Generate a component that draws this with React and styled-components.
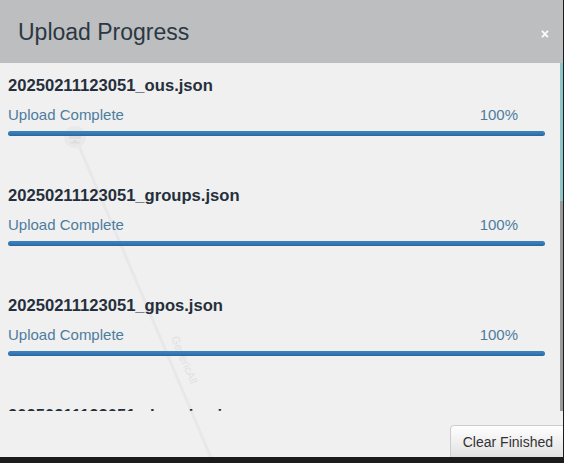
import React from 'react';
import styled, { createGlobalStyle } from 'styled-components';

const GlobalStyle = createGlobalStyle`
  html, body {
    margin: 0;
    padding: 0;
    background: #1b1b1b;
  }
  body {
    font-family: "Liberation Sans", Arial, sans-serif;
  }
`;

const Panel = styled.div`
  position: relative;
  width: 563px;
  height: 457px;
  background: #f0f0f0;
  display: flex;
  flex-direction: column;
  overflow: hidden;
`;

const Header = styled.div`
  position: relative;
  z-index: 2;
  height: 63px;
  flex-shrink: 0;
  background: #bdbebf;
  display: flex;
  align-items: center;
  justify-content: space-between;
  padding: 0 14px 0 18px;
`;

const Title = styled.h4`
  margin: 0;
  font-size: 23px;
  font-weight: normal;
  color: #2b3744;
  line-height: 26px;
`;

const Close = styled.span`
  color: #fff;
  font-size: 14px;
  font-weight: bold;
  line-height: 14px;
  margin-top: 4px;
`;

// faint graph sitting behind the modal body
const Graph = styled.svg`
  position: absolute;
  left: 0;
  top: 0;
  width: 563px;
  height: 457px;
  z-index: 0;
  pointer-events: none;
`;

const Body = styled.div`
  position: relative;
  z-index: 1;
  flex: 1;
  display: flex;
  min-height: 0;
`;

const List = styled.div`
  flex: 1;
  overflow: hidden;
  padding: 0 15px 0 8px;
`;

const ScrollTrack = styled.div`
  width: 3px;
  flex-shrink: 0;
  background: #9a9a9a;
`;

const ScrollThumb = styled.div`
  background: #8ec5c8;
`;

const Item = styled.div`
  height: 110px;
  padding-top: 13px;
  box-sizing: border-box;
`;

const FileName = styled.div`
  font-size: 16.6px;
  font-weight: bold;
  color: #252f3b;
  line-height: 20px;
`;

const StatusRow = styled.div`
  display: flex;
  justify-content: space-between;
  margin-top: 10px;
  padding-right: 27px;
  font-size: 15px;
  line-height: 18px;
  color: #4d7c9f;
`;

const Bar = styled.div`
  margin-top: 7px;
  height: 5px;
  border-radius: 3px;
  background: linear-gradient(to bottom, #3d83bf 0%, #337ab7 50%, #2a6598 100%);
`;

const Footer = styled.div`
  position: relative;
  z-index: 1;
  height: 46px;
  flex-shrink: 0;
  display: flex;
  justify-content: flex-end;
  align-items: flex-start;
  padding-top: 14px;
  box-sizing: border-box;
  overflow: hidden;
`;

const Button = styled.button`
  height: 34px;
  margin-right: -3px;
  padding: 0 12px;
  border: 1px solid #cccccc;
  border-radius: 4px;
  background: linear-gradient(to bottom, #ffffff 0%, #e0e0e0 100%);
  font-family: "Liberation Sans", Arial, sans-serif;
  font-size: 14px;
  color: #333;
  white-space: nowrap;
`;

const files = [
  'ous', 'groups', 'gpos', 'domains',
  'computers', 'users', 'containers', 'certtemplates',
];

const BackgroundGraph = () => (
  <Graph viewBox="0 0 563 457">
    <line x1="79" y1="146" x2="212" y2="460" stroke="#e8e8e8" strokeWidth="3" />
    <text
      x="0"
      y="0"
      fill="#e0e0e0"
      fontSize="11"
      fontFamily="Liberation Sans, Arial, sans-serif"
      transform="translate(171 338) rotate(67)"
    >
      GenericAll
    </text>
    <circle cx="75" cy="137" r="11" fill="#e9e9e9" />
    <rect x="69" y="131" width="12" height="8" rx="1" fill="#dedede" />
    <rect x="73" y="140" width="4" height="2" fill="#dedede" />
    <rect x="70" y="142" width="10" height="1.5" fill="#dedede" />
  </Graph>
);

const UploadItem = ({ name }) => (
  <Item>
    <FileName>20250211123051_{name}.json</FileName>
    <StatusRow>
      <span>Upload Complete</span>
      <span>100%</span>
    </StatusRow>
    <Bar />
  </Item>
);

export default function App() {
  const viewH = 348;
  const contentH = files.length * 110;
  const thumbH = Math.round((viewH * viewH) / contentH);

  return (
    <>
      <GlobalStyle />
      <Panel>
        <BackgroundGraph />
        <Header>
          <Title>Upload Progress</Title>
          <Close>×</Close>
        </Header>
        <Body>
          <List>
            {files.map((f) => (
              <UploadItem key={f} name={f} />
            ))}
          </List>
          <ScrollTrack>
            <ScrollThumb style={{ height: thumbH }} />
          </ScrollTrack>
        </Body>
        <Footer>
          <Button>Clear Finished</Button>
        </Footer>
      </Panel>
    </>
  );
}
